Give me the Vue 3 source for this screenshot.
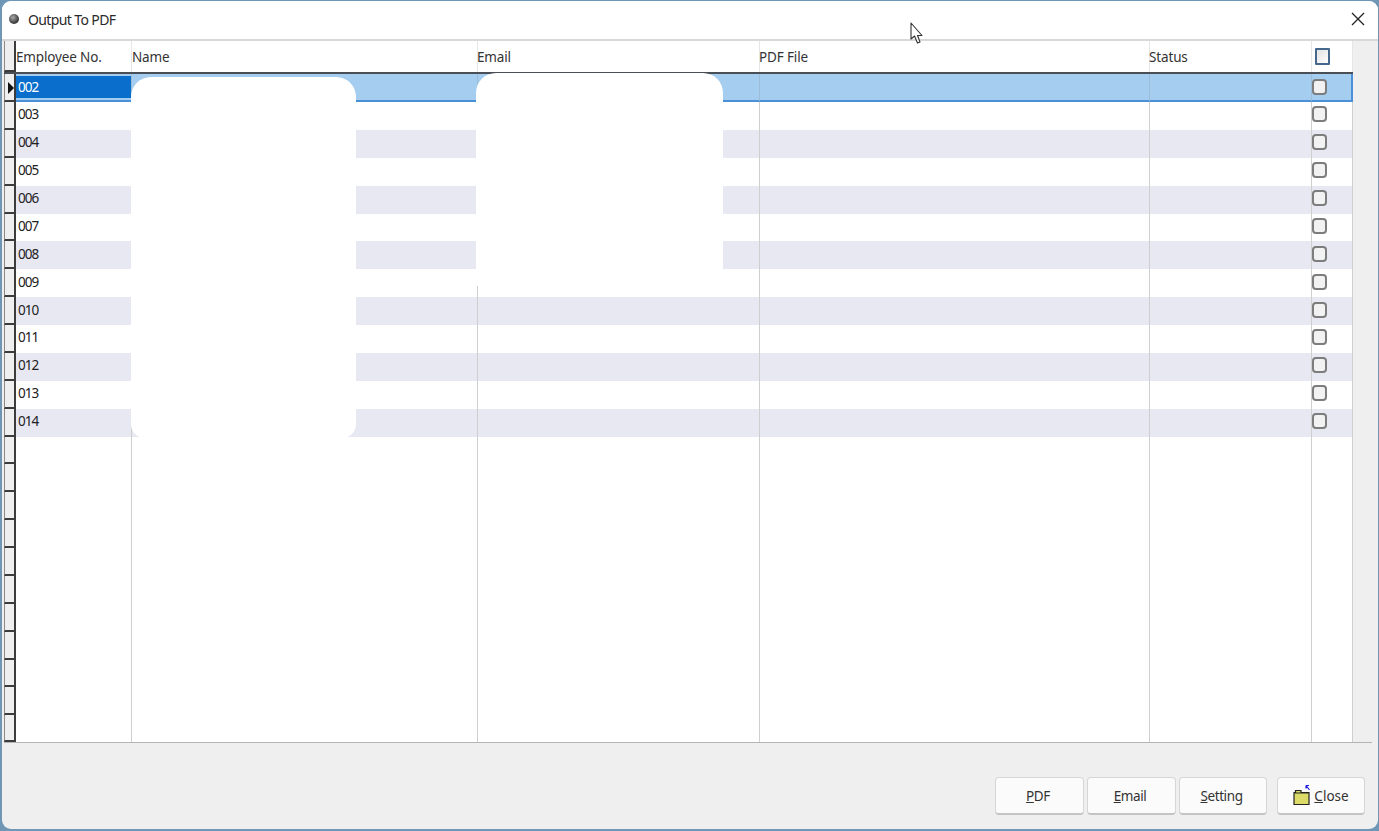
<script setup>
const ids = ['002','003','004','005','006','007','008','009','010','011','012','013','014']
const rows = Array.from({ length: 24 }, (_, i) => ({
  id: ids[i] || '',
  filled: i < ids.length,
  band: i < ids.length && i > 0 && i % 2 === 0,
  selected: i === 0
}))
</script>

<template>
  <div class="desktop">
    <div class="window">
      <header class="title">
        <span class="dot"></span>
        <span class="title-text">Output To PDF</span>
        <svg class="close-x" width="14" height="14" viewBox="0 0 14 14">
          <path d="M1 1 L13 13 M13 1 L1 13" stroke="#222" stroke-width="1.3" fill="none" />
        </svg>
      </header>

      <section class="grid-wrap">
        <div class="grid">
          <div class="row head">
            <div class="ind"></div>
            <div class="cell">Employee No.</div>
            <div class="cell">Name</div>
            <div class="cell shift">Email</div>
            <div class="cell shift">PDF File</div>
            <div class="cell shift">Status</div>
            <div class="cell chk"><span class="box head-box"></span></div>
          </div>
          <div class="body">
            <div
              v-for="(r, i) in rows"
              :key="i"
              class="row"
              :class="{ band: r.band, selected: r.selected }"
            >
              <div class="ind">
                <span v-if="r.selected" class="arrow"></span>
              </div>
              <div class="cell id"><span class="id-text">{{ r.id }}</span></div>
              <div class="cell"></div>
              <div class="cell"></div>
              <div class="cell"></div>
              <div class="cell"></div>
              <div class="cell chk"><span v-if="r.filled" class="box"></span></div>
            </div>
          </div>
          <div class="mask mask-name"></div>
          <div class="mask mask-email"></div>
        </div>
        <div class="side"></div>
      </section>

      <footer class="footer">
        <button class="btn btn-text"><u>P</u>DF</button>
        <button class="btn btn-text"><u>E</u>mail</button>
        <button class="btn btn-text btn-setting"><u>S</u>etting</button>
        <button class="btn btn-close">
          <svg width="18" height="24" viewBox="0 0 18 24">
            <path d="M1 20.5 V8.5 H2.5 V6.5 H8 V8.5 H16 V20.5 Z" fill="#dcdb68" stroke="#222" stroke-width="1.2" />
            <path d="M1.5 9 H15.5" stroke="#222" stroke-width="1" fill="none" />
            <path d="M16.5 6 L13 1.5 M13 1.5 V4.5 M13 1.5 H16" stroke="#1a1ae0" stroke-width="1.2" fill="none" />
          </svg>
          <span><u>C</u>lose</span>
        </button>
      </footer>
    </div>

    <svg class="cursor" width="13" height="23" viewBox="0 0 13 23">
      <path d="M1 1 V17 L4.5 14 L7.5 21 L10 20 L7.5 13.5 H12 Z" fill="#fff" stroke="#333" stroke-width="1.1" stroke-linejoin="round" />
    </svg>
  </div>
</template>

<style>
html, body { margin: 0; background: #6f97b5; }
</style>

<style scoped>
.desktop {
  position: relative;
  width: 1379px;
  height: 831px;
  background: #6f97b5;
  padding: 1px 1px 2px 2px;
  box-sizing: border-box;
  overflow: hidden;
  font-family: "Noto Sans", sans-serif;
  color: #2a2a2a;
}
.window {
  height: 100%;
  display: flex;
  flex-direction: column;
  background: #efefef;
  border-radius: 9px;
  overflow: hidden;
}
.title {
  height: 40px;
  flex: none;
  background: #fff;
  display: flex;
  align-items: center;
  padding: 0 13px 2px 7px;
  border-bottom: 2px solid #d8d8d8;
  box-sizing: border-box;
}
.dot {
  width: 10px;
  height: 10px;
  border-radius: 50%;
  background: radial-gradient(circle at 40% 35%, #aaa, #444 60%, #222);
}
.title-text {
  margin-left: 9px;
  font-size: 14px;
  letter-spacing: -0.62px;
  flex: 1;
}
.close-x { flex: none; }
.grid-wrap {
  display: flex;
  height: 702px;
  flex: none;
  margin-left: 2px;
  margin-right: 6px;
  border-bottom: 1px solid #b5b5b5;
  box-sizing: border-box;
}
.grid {
  position: relative;
  width: 1349px;
  flex: none;
  background: #fff;
}
.side {
  flex: 1;
  background: #efefef;
}
.row {
  display: grid;
  grid-template-columns: 12px 116px 346px 282px 390px 162px 41px;
  height: 27.875px;
  box-sizing: border-box;
}
.body .row:last-child { height: 27px; }
.head {
  height: 33px;
  border-bottom: 2px solid #4a4f55;
}
.ind {
  position: relative;
  background: #efefef;
  border-left: 1px solid #8a8a8a;
  border-right: 2px solid #3c3c3c;
  border-bottom: 2px solid #3c3c3c;
  box-sizing: border-box;
}
.cell {
  border-right: 1px solid #cfcfcf;
  display: flex;
  align-items: center;
  font-size: 13.5px;
  letter-spacing: -0.15px;
  color: #333;
  box-sizing: border-box;
  min-width: 0;
  padding-bottom: 3px;
}
.head .cell { padding-bottom: 0; border-right-color: #e6e6e6; }
.head .shift { text-indent: -1px; }
.body { height: 668px; overflow: hidden; }
.id { padding-left: 1px; color: #222; letter-spacing: -0.95px; }
.id-text { width: 100%; line-height: 22px; padding-left: 1px; }
.band .cell { background: #e8e8f3; }
.selected { height: 28px; }
.selected .cell {
  background: #a5cdf0;
  border-right-color: #9dbcd6;
  border-bottom: 2px solid #4a90d9;
  padding-bottom: 0;
}
.selected .id {
  padding: 0;
}
.selected .id-text {
  background: #0a6fcc;
  color: #fff;
  padding-left: 2px;
}
.selected .chk { border-right: 2px solid #4a90d9; }
.arrow {
  position: absolute;
  right: 0;
  top: 8px;
  border-left: 6px solid #111;
  border-top: 6px solid transparent;
  border-bottom: 6px solid transparent;
}
.box {
  width: 15px;
  height: 16px;
  box-sizing: border-box;
  border: 2px solid #7d7d7d;
  border-radius: 4px;
  background: #f2f2f2;
}
.head-box {
  width: 15px;
  height: 17px;
  margin-left: 3px;
  border: 2px solid #45688c;
  border-radius: 1px;
  background: linear-gradient(135deg, #e4e4e4, #fdfdfd);
}
.mask {
  position: absolute;
  background: #fff;
}
.mask-name {
  left: 127px;
  top: 36px;
  width: 225px;
  height: 361px;
  border-radius: 20px 20px 14px 14px;
}
.mask-email {
  left: 472px;
  top: 32px;
  width: 247px;
  height: 213px;
  border-radius: 20px 20px 0 0;
}
.footer {
  flex: 1;
  display: flex;
  justify-content: flex-end;
  align-items: flex-start;
  padding: 34px 13px 0 0;
  gap: 3px;
}
.btn {
  width: 89px;
  height: 38px;
  background: #fbfbfb;
  border: 1px solid #d6d6d6;
  border-bottom: 2px solid #c4c4c4;
  border-radius: 4px;
  font-family: "Noto Sans", sans-serif;
  font-size: 13.5px;
  letter-spacing: -0.4px;
  color: #333;
  padding: 0;
  display: flex;
  align-items: center;
  justify-content: center;
}
.btn-text { padding-right: 3px; }
.btn-setting { width: 88px; }
.btn-close {
  width: 88px;
  margin-left: 7px;
  gap: 3px;
  letter-spacing: 0;
}
.cursor {
  position: absolute;
  left: 910px;
  top: 22px;
}
</style>
